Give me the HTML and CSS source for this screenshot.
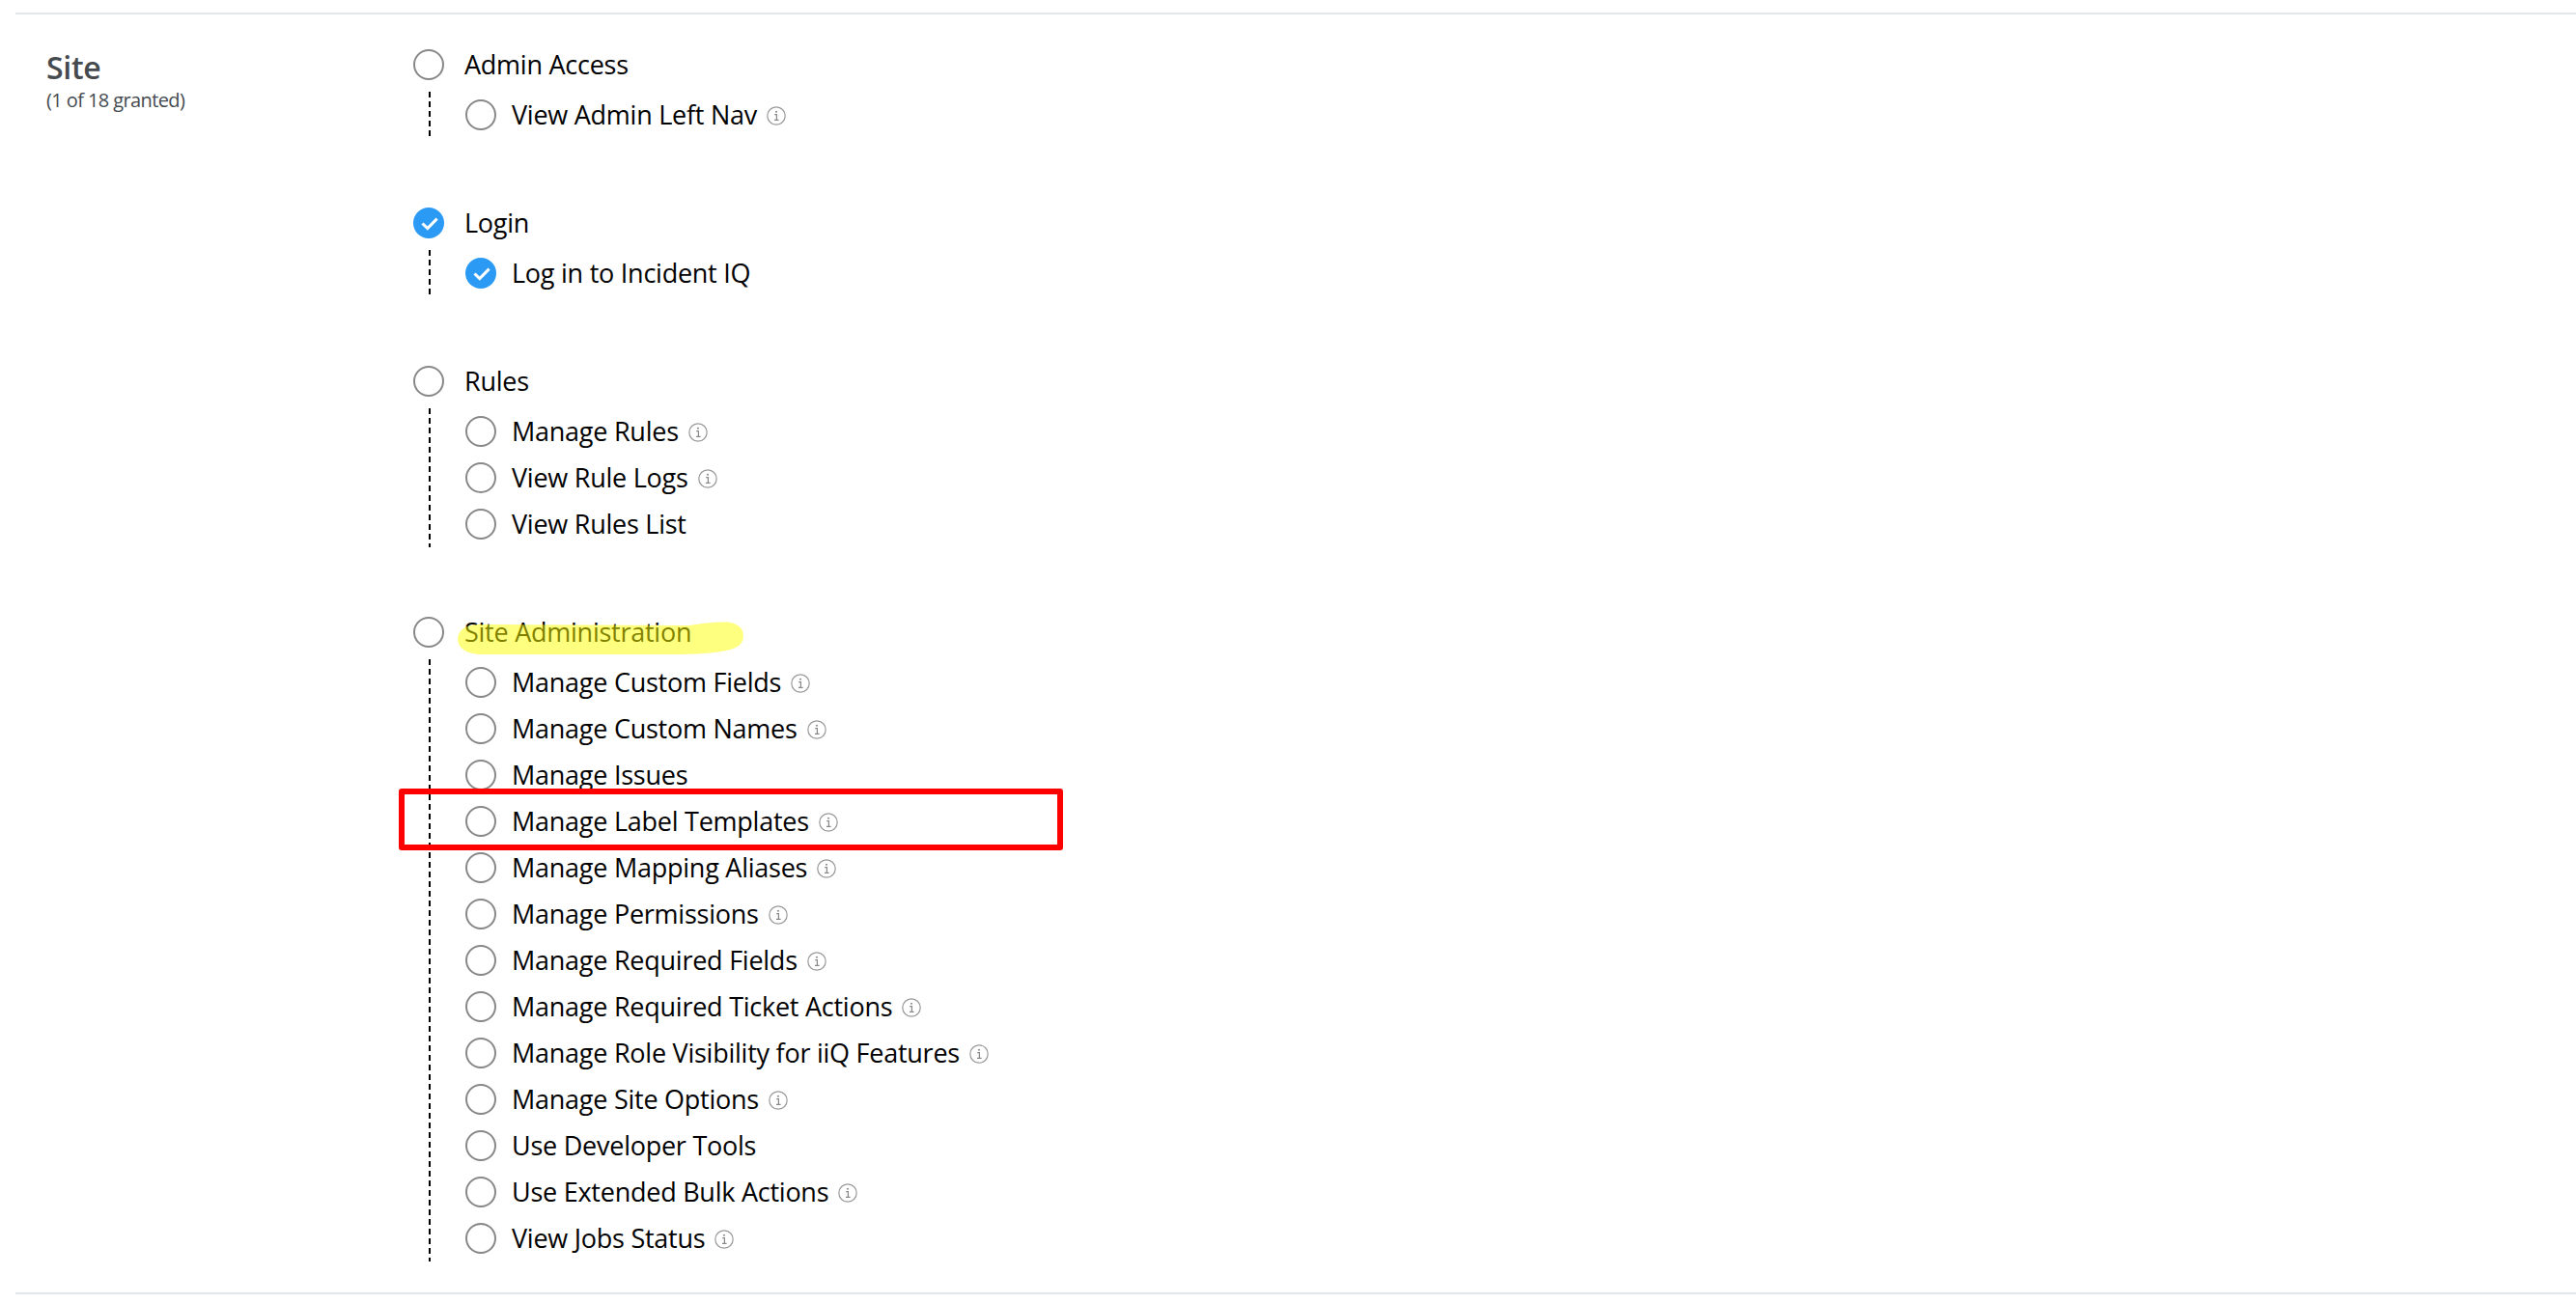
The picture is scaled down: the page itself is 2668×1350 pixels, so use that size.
FILE: index.html
```html
<!DOCTYPE html>
<html lang="en">
<head>
<meta charset="utf-8">
<title>Site permissions</title>
<link rel="stylesheet" href="styles.css">
</head>
<body>
<svg class="defs" width="0" height="0" aria-hidden="true">
  <symbol id="info" viewBox="0 0 20 20">
    <circle cx="10" cy="10" r="9.2" fill="none" stroke="#999" stroke-width="1.2"/>
    <path d="M8.2 8.6H10.4V14.2M8 14.4H12.6" fill="none" stroke="#888" stroke-width="1.2"/>
    <circle cx="10" cy="5.8" r="1" fill="#888"/>
  </symbol>
  <symbol id="check" viewBox="0 0 32 32">
    <circle cx="16" cy="16" r="16" fill="#2a9af5"/>
    <path d="M9.5 16.5L14.8 21.6L24.6 11.6" fill="none" stroke="#fff" stroke-width="3"/>
  </symbol>
</svg>
<main class="page">
  <section class="section">
    <div class="summary">
      <h2 class="title">Site</h2>
      <p class="count">(1 of 18 granted)</p>
    </div>
    <div class="groups">
      <div class="group">
        <div class="row parent"><span class="radio"></span><span class="label">Admin Access</span></div>
        <ul class="items">
          <li class="row"><span class="radio"></span><span class="label">View Admin Left Nav</span><svg class="info"><use href="#info"/></svg></li>
        </ul>
      </div>
      <div class="group">
        <div class="row parent"><svg class="checked"><use href="#check"/></svg><span class="label">Login</span></div>
        <ul class="items">
          <li class="row"><svg class="checked"><use href="#check"/></svg><span class="label">Log in to Incident IQ</span></li>
        </ul>
      </div>
      <div class="group">
        <div class="row parent"><span class="radio"></span><span class="label">Rules</span></div>
        <ul class="items">
          <li class="row"><span class="radio"></span><span class="label">Manage Rules</span><svg class="info"><use href="#info"/></svg></li>
          <li class="row"><span class="radio"></span><span class="label">View Rule Logs</span><svg class="info"><use href="#info"/></svg></li>
          <li class="row"><span class="radio"></span><span class="label">View Rules List</span></li>
        </ul>
      </div>
      <div class="group">
        <div class="row parent"><span class="radio"></span><span class="label marked">Site Administration<svg class="marker" viewBox="0 0 296 34"><path d="M20 3L240 4Q262 0 280 .5Q296 3 296 15Q296 27 278 30Q260 34 220 34L22 34Q0 32 0 17Q2 4 20 3Z"/></svg></span></div>
        <ul class="items">
          <li class="row"><span class="radio"></span><span class="label">Manage Custom Fields</span><svg class="info"><use href="#info"/></svg></li>
          <li class="row"><span class="radio"></span><span class="label">Manage Custom Names</span><svg class="info"><use href="#info"/></svg></li>
          <li class="row"><span class="radio"></span><span class="label">Manage Issues</span></li>
          <li class="row boxed"><span class="radio"></span><span class="label">Manage Label Templates</span><svg class="info"><use href="#info"/></svg><span class="callout"></span></li>
          <li class="row"><span class="radio"></span><span class="label">Manage Mapping Aliases</span><svg class="info"><use href="#info"/></svg></li>
          <li class="row"><span class="radio"></span><span class="label">Manage Permissions</span><svg class="info"><use href="#info"/></svg></li>
          <li class="row"><span class="radio"></span><span class="label">Manage Required Fields</span><svg class="info"><use href="#info"/></svg></li>
          <li class="row"><span class="radio"></span><span class="label">Manage Required Ticket Actions</span><svg class="info"><use href="#info"/></svg></li>
          <li class="row"><span class="radio"></span><span class="label">Manage Role Visibility for iiQ Features</span><svg class="info"><use href="#info"/></svg></li>
          <li class="row"><span class="radio"></span><span class="label">Manage Site Options</span><svg class="info"><use href="#info"/></svg></li>
          <li class="row"><span class="radio"></span><span class="label">Use Developer Tools</span></li>
          <li class="row"><span class="radio"></span><span class="label">Use Extended Bulk Actions</span><svg class="info"><use href="#info"/></svg></li>
          <li class="row"><span class="radio"></span><span class="label">View Jobs Status</span><svg class="info"><use href="#info"/></svg></li>
        </ul>
      </div>
    </div>
  </section>
</main>
</body>
</html>
```
FILE: styles.css
```css
* { box-sizing: border-box; }
html, body { margin: 0; background: #fff; }
body {
  font-family: "Open Sans", "Liberation Sans", sans-serif;
  color: #000;
  overflow: hidden;
}
.defs { position: absolute; }
.page { padding: 13px 0 0 16px; }
.section {
  display: flex;
  border-top: 2px solid #e2e6ea;
  border-bottom: 2px solid #e2e6ea;
  padding: 36px 0 32px;
}
.summary { width: 412px; flex: none; padding-left: 32px; }
.title {
  margin: 0;
  font-size: 32px;
  line-height: 38px;
  font-weight: 600;
  letter-spacing: -.3px;
  color: #454a4f;
}
.count {
  margin: 2px 0 0;
  font-size: 20px;
  line-height: 26px;
  letter-spacing: -.6px;
  color: #454a4f;
}
.groups { display: flex; flex-direction: column; gap: 72px; }
.row {
  display: flex;
  align-items: center;
  height: 32px;
  font-size: 27px;
  letter-spacing: -.25px;
  white-space: nowrap;
}
.label { padding-bottom: 2px; }
.parent { gap: 21px; }
.items {
  list-style: none;
  margin: 12px 0 0;
  padding: 8px 0 8px 54px;
  display: flex;
  flex-direction: column;
  gap: 16px;
  background: linear-gradient(#000 60%, transparent 60%) 16px 0 / 2px 10px repeat-y;
}
.items .row { gap: 16px; }
.radio {
  flex: none;
  width: 32px;
  height: 32px;
  border: 2px solid #888;
  border-radius: 50%;
  background: #fff;
}
.checked { flex: none; width: 32px; height: 32px; }
.info { flex: none; width: 20px; height: 20px; margin-left: -6px; margin-top: 2px; }
.marked { position: relative; }
.marker {
  position: absolute;
  left: -7px;
  top: 8px;
  width: 296px;
  height: 34px;
  fill: rgba(255, 255, 0, .5);
}
.boxed { position: relative; }
.callout {
  position: absolute;
  left: -69px;
  top: -18px;
  width: 688px;
  height: 64px;
  border: 6px solid #f00;
  border-radius: 3px;
}
```
